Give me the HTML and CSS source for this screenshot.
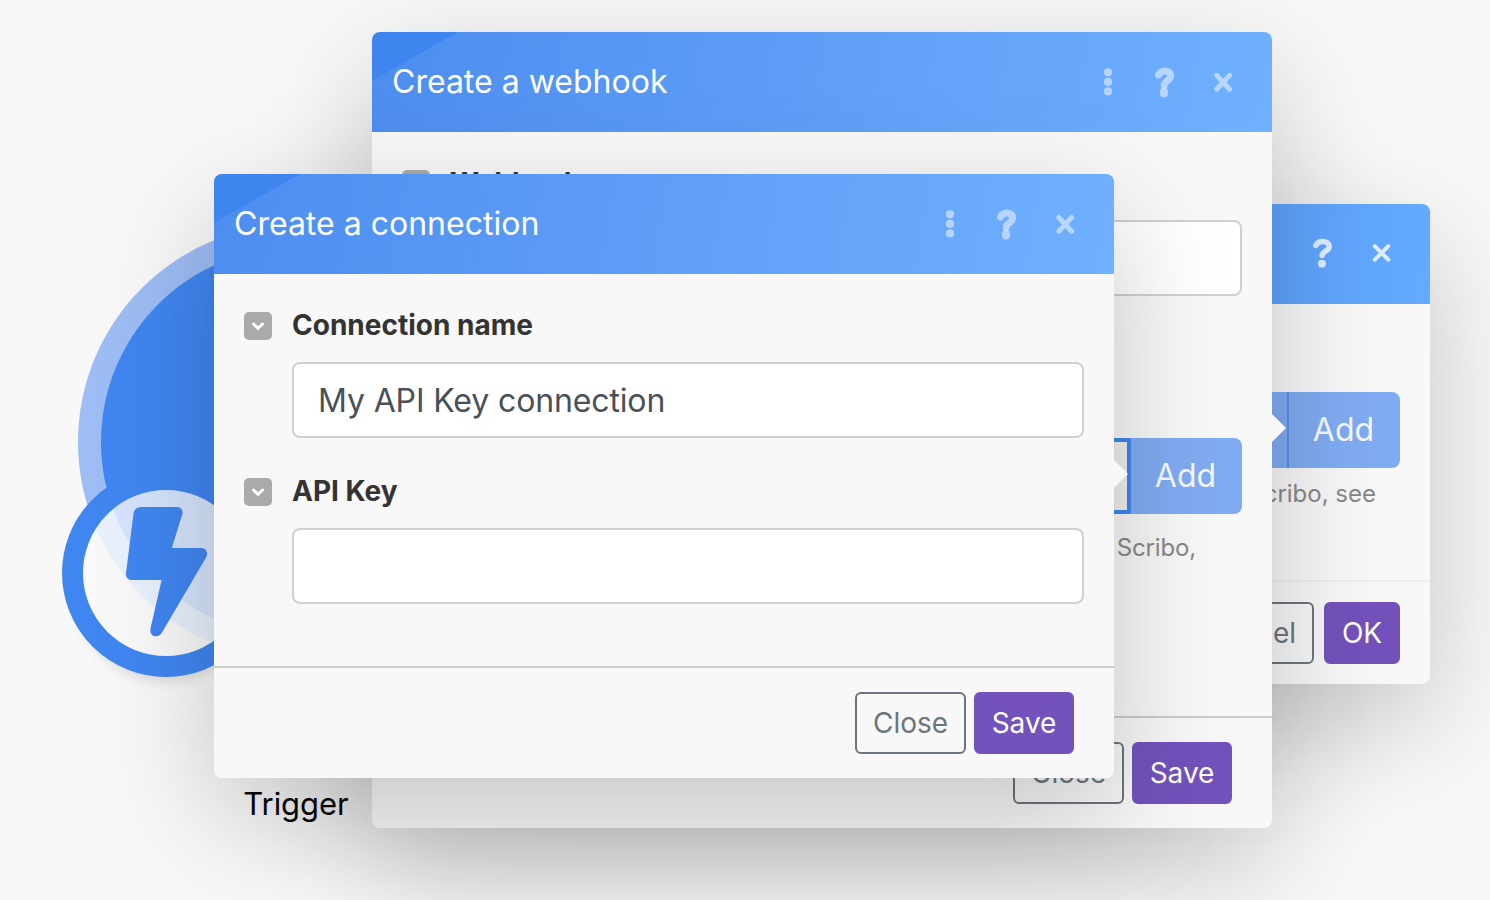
FILE: index.html
```html
<!DOCTYPE html>
<html lang="en">
<head>
<meta charset="utf-8">
<title>Create a connection</title>
<link rel="stylesheet" href="styles.css">
</head>
<body>
<svg class="defs" width="0" height="0" aria-hidden="true">
  <symbol id="dots" viewBox="0 0 10 28"><circle cx="5" cy="4.300" r="4.100"/><circle cx="5" cy="13.900" r="4.100"/><circle cx="5" cy="23.400" r="4.100"/></symbol>
  <symbol id="help" viewBox="0 0 20 32"><path d="M3.500 9C4.900 6 6.900 4.900 9.500 4.900c3.700 0 6.100 1.700 6.100 4.800 0 5.300-6.500 5.300-6.500 9.900" fill="none" stroke="currentColor" stroke-width="7" stroke-linecap="round" stroke-linejoin="round"/><rect x="5" y="21.800" width="8" height="9.800" rx="4"/></symbol>
  <symbol id="help-light" viewBox="0 0 20 32"><path d="M2.800 7.400C4.600 4.200 7 3.500 9.600 3.500c3.600 0 6.600 1.900 6.600 5 0 4.700-7.100 4.700-7.100 9" fill="none" stroke="currentColor" stroke-width="5.500" stroke-linecap="round" stroke-linejoin="round"/><circle cx="9" cy="25.700" r="3.900"/></symbol>
  <symbol id="cross" viewBox="0 0 20 22"><path d="M2.800 4.400 15.600 18.200M15.600 4.400 2.800 18.200" fill="none" stroke="currentColor" stroke-width="5" stroke-linecap="round"/></symbol>
  <symbol id="cross-light" viewBox="0 0 20 22"><path d="M2.800 3.200 16.300 16.700M16.300 3.200 2.800 16.700" fill="none" stroke="currentColor" stroke-width="4" stroke-linecap="round"/></symbol>
  <symbol id="chev" viewBox="0 0 28 28"><path d="m9.500 12 4.500 4.400 4.500-4.400" fill="none" stroke="#fff" stroke-width="3" stroke-linecap="round" stroke-linejoin="miter"/></symbol>
</svg>
<main class="canvas">
  <div class="module">
    <svg class="module-art" viewBox="0 0 460 480" width="460" height="480">
      <circle class="badge-shadow" cx="116" cy="371" r="92"/>
      <circle cx="245.500" cy="222" r="217.500" fill="#9dbdf4"/>
      <circle cx="245.500" cy="222" r="194.500" fill="#4086f1"/>
      <circle cx="116" cy="353" r="93.500" fill="#fff" fill-opacity=".78" stroke="#4086f1" stroke-width="21"/>
      <path d="M91 287h36c4 0 6.500 3.500 5.400 7L121.800 328H151c5 0 8 5 5 9.500L112 412.500c-4 6.500-13 4.500-11.500-4L111.600 360H82c-4 0-6.500-3-6-7l7.500-59.500c.5-4 3.500-6.500 7.500-6.500z" fill="#4086f1"/>
    </svg>
    <div class="module-name">Trigger</div>
  </div>

  <section class="dialog dialog-trigger">
    <header class="bar bar-bright">
      <h2 class="title"></h2>
      <svg class="i-help"><use href="#help-light"/></svg>
      <svg class="i-cross"><use href="#cross-light"/></svg>
    </header>
    <div class="content">
      <div class="picker">
        <div class="picker-main"></div><div class="add">Add</div>
      </div>
      <p class="hint">Scribo, see</p>
    </div>
    <footer class="actions"><div class="btn btn-outline">Cancel</div><div class="btn btn-solid">OK</div></footer>
  </section>

  <section class="dialog dialog-webhook">
    <header class="bar">
      <h2 class="title">Create a webhook</h2>
      <svg class="i-dots"><use href="#dots"/></svg>
      <svg class="i-help"><use href="#help"/></svg>
      <svg class="i-cross"><use href="#cross"/></svg>
    </header>
    <div class="content">
      <div class="label"><svg class="toggle"><use href="#chev"/></svg><span class="label-text">Webhook name</span></div>
      <div class="field"></div>
      <div class="picker picker-focus">
        <div class="picker-main"></div><div class="add">Add</div>
      </div>
      <p class="hint">Scribo,</p>
    </div>
    <footer class="actions"><div class="btn btn-outline">Close</div><div class="btn btn-solid">Save</div></footer>
    <i class="pointer"></i>
  </section>

  <section class="dialog dialog-connection">
    <header class="bar">
      <h2 class="title">Create a connection</h2>
      <svg class="i-dots"><use href="#dots"/></svg>
      <svg class="i-help"><use href="#help"/></svg>
      <svg class="i-cross"><use href="#cross"/></svg>
    </header>
    <div class="content">
      <div class="label"><svg class="toggle"><use href="#chev"/></svg><span class="label-text">Connection name</span></div>
      <div class="field">My API Key connection</div>
      <div class="label"><svg class="toggle"><use href="#chev"/></svg><span class="label-text">API Key</span></div>
      <div class="field"></div>
    </div>
    <footer class="actions"><div class="btn btn-outline">Close</div><div class="btn btn-solid">Save</div></footer>
    <i class="pointer"></i>
  </section>
</main>
</body>
</html>
```
FILE: styles.css
```css
* { box-sizing: border-box; }
body { margin: 0; background: #f8f8f8; font-family: Inter, "Liberation Sans", sans-serif; }
.defs { position: absolute; }
.canvas { position: relative; width: 1490px; height: 900px; overflow: hidden; }

.module { position: absolute; left: 50px; top: 220px; width: 492px; }
.module-art { display: block; }
.badge-shadow { fill: rgba(0, 0, 0, .09); filter: blur(5px); }
.module-name { margin-top: 84px; text-align: center; font-size: 31px; line-height: 40px; letter-spacing: -.05px; color: #050505; }

.dialog {
  position: absolute;
  width: 900px;
  display: flex;
  flex-direction: column;
  background: #f8f8f8;
  border-radius: 8px;
  box-shadow: 0 40px 120px rgba(0, 0, 0, .21);
}
.dialog-trigger { left: 530px; top: 204px; height: 480px; }
.dialog-webhook { left: 372px; top: 32px; height: 796px; }
.dialog-connection { left: 214px; top: 174px; height: 604px; }

.bar {
  height: 100px;
  flex: none;
  display: flex;
  align-items: center;
  padding: 0 38px 0 20px;
  border-radius: 8px 8px 0 0;
  color: rgba(255, 255, 255, .5);
  fill: currentColor;
  background:
    linear-gradient(150.300deg, #3f85ef 42.300px, rgba(63, 133, 239, 0) 42.800px),
    linear-gradient(100deg, #4d8df0, #70b0ff);
}
.bar-bright { background: linear-gradient(100deg, #3f86f0, #64aaff); color: rgba(255, 255, 255, .8); }
.title { margin: 0; flex: 1; color: #fff; font-size: 32px; font-weight: 370; letter-spacing: .01px; line-height: 40px; }
.i-dots { width: 10px; height: 28px; margin-right: 42px; }
.i-help { width: 20px; height: 32px; margin-right: 39px; }
.i-cross { width: 20px; height: 22px; }

.content { flex: 1; padding: 38px 30px 0; }
.label { display: flex; align-items: center; gap: 20px; height: 28px; color: #333; font-size: 28px; font-weight: 700; }
.label-text { padding-bottom: 2px; }
.toggle { width: 28px; height: 28px; flex: none; border-radius: 5px; background: #aaa; }
.field {
  height: 76px;
  margin: 22px 0 40px 48px;
  padding: 0 24px;
  border: 2px solid #d0d0d0;
  border-radius: 8px;
  background: #fff;
  color: #495057;
  font-size: 32px;
  font-weight: 380;
  letter-spacing: -.13px;
  line-height: 74px;
}
.picker { height: 76px; margin-left: 48px; display: flex; }
.picker-main { flex: 1; background: #80abf2; border-right: 2px solid #5591ea; border-radius: 8px 0 0 8px; }
.add { width: 111px; padding-right: 2px; background: #80acf3; border-radius: 0 8px 8px 0; color: #f7f9fd; font-size: 32px; font-weight: 380; line-height: 76px; text-align: center; }
.picker-focus .picker-main { background: #f0f0f0; border: 4px solid #4086f1; border-radius: 8px 0 0 8px; }
.hint { margin: 10px 0 0; color: #888; font-size: 24px; line-height: 32px; text-align: right; }

.dialog-trigger .content { padding-top: 88px; }
.dialog-trigger .hint { padding-right: 24px; }
.dialog-webhook .picker { margin-top: 142px; }
.dialog-webhook .hint { margin-top: 18px; padding-right: 46px; letter-spacing: -.15px; }

.actions { height: 112px; flex: none; display: flex; justify-content: flex-end; gap: 8px; padding: 24px 40px 0 0; border-top: 2px solid #ccc; }
.dialog-trigger .actions { height: 104px; gap: 10px; padding: 20px 30px 0 0; border-color: #eee; }
.btn { height: 62px; padding: 0 16px; border: 2px solid #6c757d; border-radius: 6px; font-size: 28px; font-weight: 380; line-height: 59px; letter-spacing: -.05px; text-align: center; }
.btn-outline { color: #6c757d; width: 111px; padding: 0; }
.dialog-trigger .btn-outline { width: auto; padding: 0 16px; }
.btn-solid { background: #7352bc; border-color: #7352bc; color: #fff; width: 100px; padding: 0; }
.dialog-trigger .btn-solid { width: 76px; }

.pointer {
  position: absolute;
  left: 900px;
  top: 286px;
  border: 14px solid transparent;
  border-left-color: #f8f8f8;
  border-right-width: 0;
}
.dialog-webhook .pointer { top: 382px; }
```
